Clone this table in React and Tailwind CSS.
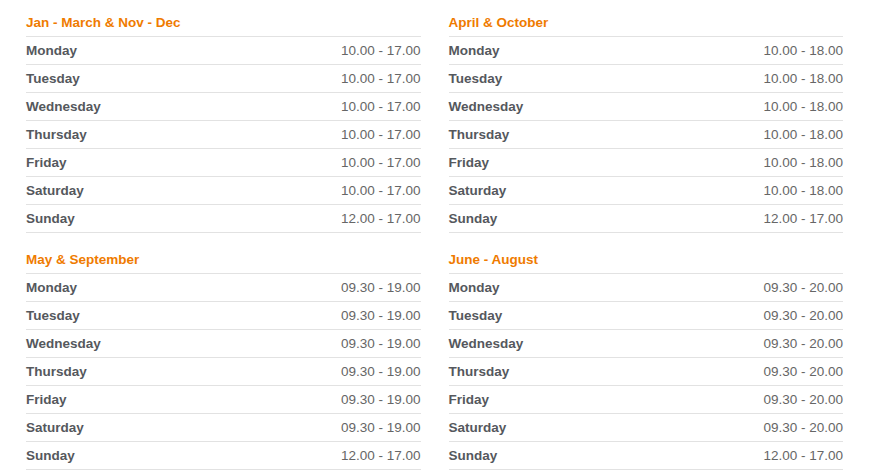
const sections = [
  {
    title: 'Jan - March & Nov - Dec',
    hours: ['10.00 - 17.00', '10.00 - 17.00', '10.00 - 17.00', '10.00 - 17.00', '10.00 - 17.00', '10.00 - 17.00', '12.00 - 17.00'],
  },
  {
    title: 'April & October',
    hours: ['10.00 - 18.00', '10.00 - 18.00', '10.00 - 18.00', '10.00 - 18.00', '10.00 - 18.00', '10.00 - 18.00', '12.00 - 17.00'],
  },
  {
    title: 'May & September',
    hours: ['09.30 - 19.00', '09.30 - 19.00', '09.30 - 19.00', '09.30 - 19.00', '09.30 - 19.00', '09.30 - 19.00', '12.00 - 17.00'],
  },
  {
    title: 'June - August',
    hours: ['09.30 - 20.00', '09.30 - 20.00', '09.30 - 20.00', '09.30 - 20.00', '09.30 - 20.00', '09.30 - 20.00', '12.00 - 17.00'],
  },
];

const days = ['Monday', 'Tuesday', 'Wednesday', 'Thursday', 'Friday', 'Saturday', 'Sunday'];

export default function App() {
  return (
    <div className="min-h-screen bg-white px-[26px] pt-[9px] font-['Liberation_Sans',Arial,sans-serif] text-[13.5px]">
      <div className="grid grid-cols-2 gap-x-[28px] gap-y-[13px]">
        {sections.map((s) => (
          <div key={s.title}>
            <div className="flex h-[28px] items-center border-b border-[#e2e2e2] pt-[2px] font-bold text-[#ef7b00]">
              {s.title}
            </div>
            {days.map((d, i) => (
              <div key={d} className="flex h-[28px] items-center justify-between border-b border-[#e2e2e2] pt-[2px]">
                <span className="font-bold text-[#55585d]">{d}</span>
                <span className="text-[#666666]">{s.hours[i]}</span>
              </div>
            ))}
          </div>
        ))}
      </div>
    </div>
  );
}
